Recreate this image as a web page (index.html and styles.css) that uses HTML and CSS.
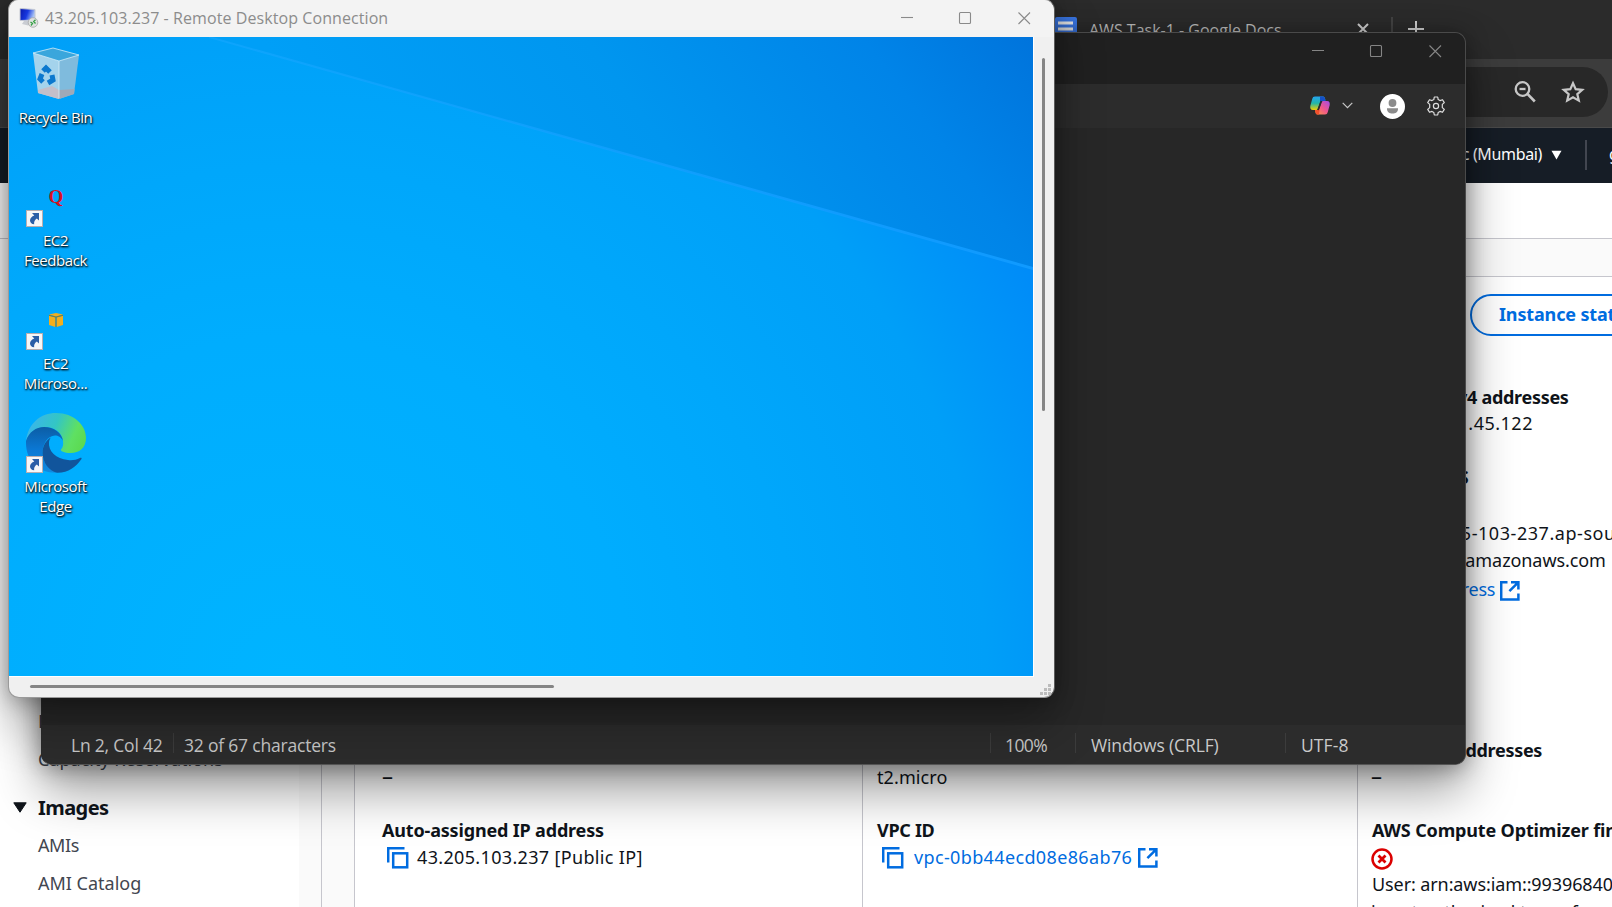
FILE: index.html
```html
<!DOCTYPE html>
<html lang="en">
<head>
<meta charset="utf-8">
<title>Desktop</title>
<link rel="stylesheet" href="styles.css">
</head>
<body>
<svg class="defs" width="0" height="0">
  <defs>
    <symbol id="copy" viewBox="0 0 22 22"><path d="M1.2 15.5V1.2H17.5" fill="none" stroke="#006ce0" stroke-width="2.5"/><rect x="6.2" y="6.3" width="14" height="14" fill="none" stroke="#006ce0" stroke-width="2.5"/></symbol>
    <symbol id="ext" viewBox="0 0 20 20"><path d="M7.5 1.2H1.2V18.4H18.4V12.5M11 1.2H18.4V8.5M18 1.6L9.4 10.2" fill="none" stroke="#006ce0" stroke-width="2.5"/></symbol>
    <symbol id="shortcut" viewBox="0 0 17 17"><rect x=".5" y=".5" width="16" height="16" fill="#f6f6f8" stroke="#b9aeb0"/><path d="M6 3H13V10.5L10.8 8.4C8.5 10 7.8 12 8.2 14.3C5.5 14.3 4 12.500 4 10.3C4.200 8 5.800 6.300 8.300 5.400Z" fill="#2b5ea7"/></symbol>
  </defs>
</svg>

<div class="browser">
  <div class="tabs">
    <svg class="docs" width="22" height="28" viewBox="0 0 22 28"><rect width="22" height="28" rx="2" fill="#3b78e7"/><path d="M3 6H18M3 12H18M3 18H13" stroke="#f1f1f1" stroke-width="3"/></svg>
    <span class="tabname">AWS Task-1 - Google Docs</span>
    <svg class="tabx" width="12" height="12" viewBox="0 0 12 12"><path d="M1 1L11 11M11 1L1 11" stroke="#d0d0d0" stroke-width="2"/></svg>
    <i class="tabsep"></i>
    <svg class="tabplus" width="16" height="16" viewBox="0 0 16 16"><path d="M8 0V16M0 8H16" stroke="#d0d0d0" stroke-width="2"/></svg>
  </div>
  <div class="toolbar">
    <div class="omnibox">
      <svg width="22" height="22" viewBox="0 0 22 22" fill="none" stroke="#c7c7c7" stroke-width="2.300"><circle cx="8.500" cy="8" r="6.800"/><path d="M5.500 8H11.500" /><path d="M13.200 12.700L20.800 20.500" stroke-width="2.600"/></svg>
      <svg width="24" height="24" viewBox="0 0 24 24" fill="none" stroke="#c7c7c7" stroke-width="2.200"><path d="M12 3.200L14.700 9.200L21.200 9.800L16.300 14.100L17.800 20.600L12 17.200L6.200 20.600L7.700 14.100L2.800 9.800L9.300 9.200Z"/></svg>
    </div>
  </div>
  <div class="awsnav">
    <span class="region">Asia Pacific (Mumbai)</span>
    <svg width="11" height="10" viewBox="0 0 11 10"><path d="M.5 .8H10.500L5.500 9.500Z" fill="#fff"/></svg>
    <i class="navsep"></i>
    <span class="user">g</span>
  </div>
  <div class="strip"></div>
  <div class="page">
    <aside class="side">
      <span class="item">Dedicated Hosts</span>
      <span class="item cap">Capacity Reservations</span>
      <div class="group"><svg width="14" height="11" viewBox="0 0 14 11"><path d="M.8 .8H13.200L7 10.200Z" fill="#0f141a" stroke="#0f141a" stroke-linejoin="round"/></svg><b>Images</b></div>
      <span class="item amis">AMIs</span>
      <span class="item catalog">AMI Catalog</span>
    </aside>
    <main class="main">
      <div class="crumbs"></div>
      <div class="panel">
        <div class="head"><span class="btn">Instance state</span></div>
        <div class="cols">
          <section class="col c1">
            <p class="dash"><span class="en">–</span></p>
            <h4 class="auto">Auto-assigned IP address</h4>
            <p class="val"><svg class="cp"><use href="#copy"/></svg><span class="ip">43.205.103.237 [Public IP]</span></p>
          </section>
          <section class="col c2">
            <p class="dash t2">t2.micro</p>
            <h4 class="vpc">VPC ID</h4>
            <p class="val"><svg class="cp"><use href="#copy"/></svg><a class="vpcid">vpc-0bb44ecd08e86ab76</a><svg class="ex"><use href="#ext"/></svg></p>
          </section>
          <section class="col c3">
            <h4 class="priv">Private IPv4 addresses</h4>
            <p class="privip">172.31.45.122</p>
            <h4 class="dnsh">Public DNS</h4>
            <p class="dns1">ec2-43-205-103-237.ap-south-</p>
            <p class="dns2">1.compute.amazonaws.com</p>
            <p class="open"><a>open address</a><svg class="ex"><use href="#ext"/></svg></p>
            <h4 class="elastic">Elastic IP addresses</h4>
            <p class="edash"><span class="en">–</span></p>
            <h4 class="opt">AWS Compute Optimizer finding</h4>
            <svg class="err" width="22" height="22" viewBox="0 0 22 22" fill="none" stroke="#db0000"><circle cx="11" cy="11" r="9.500" stroke-width="2.500"/><path d="M7.500 7.500L14.500 14.500M14.500 7.500L7.500 14.500" stroke-width="2.800"/></svg>
            <p class="arn">User: arn:aws:iam::993968409</p>
            <p class="arn2">is not authorized to perform:</p>
          </section>
        </div>
      </div>
    </main>
  </div>
</div>

<div class="notepad">
  <div class="ntitle">
    <svg width="131" height="14" viewBox="0 0 131 14" fill="none" stroke="#858585" stroke-width="1.100"><path d="M0 6.500H12"/><rect x="58.500" y="1.500" width="11" height="11" rx="1"/><path d="M117.500 1.500L129 13M129 1.500L117.500 13"/></svg>
  </div>
  <div class="ntools">
    <svg class="copilot" width="20" height="19" viewBox="0 0 20 19">
      <defs>
        <linearGradient id="ga" x1="0" y1="0" x2="0" y2="1"><stop offset="0" stop-color="#25a4f0"/><stop offset=".5" stop-color="#22b6a7"/><stop offset="1" stop-color="#f3d000"/></linearGradient>
        <linearGradient id="gb" x1="1" y1="0" x2="0" y2="1"><stop offset="0" stop-color="#a34be8"/><stop offset=".5" stop-color="#f0568c"/><stop offset="1" stop-color="#ff9c42"/></linearGradient>
      </defs>
      <path d="M5 .5H13C14.500 .5 15 2 15.500 4.500H12.500C10.500 4.500 10 6 9.500 8L8 12.500C7.500 13.500 7 14 5.500 14H3C.5 14 0 12 .3 10L2.200 3C2.700 1.300 3.500 .5 5 .5Z" fill="url(#ga)"/>
      <path d="M10 .5H13C14.500 .5 15 2 15.500 5H12.500C11 5 10.500 6 10 7Z" fill="#1450c8"/>
      <path d="M15 18.500H7.500C6 18.500 5.500 17 5 14H7.500C9 14 9.500 13 10 11L11.500 6.500C12 5.300 12.500 5 14 5H17C19.500 5 20 7 19.700 9L17.800 16C17.300 17.700 16.500 18.500 15 18.500Z" fill="url(#gb)"/>
      <path d="M5 14H8C9 14 9.400 13.200 9.800 12L9 18.500H7.500C6 18.500 5.400 17 5 14Z" fill="#f2502c"/>
      <path d="M11.300 5L8 14" stroke="#2c2c2c" stroke-width="1.600"/>
    </svg>
    <svg class="chev" width="11" height="7" viewBox="0 0 11 7"><path d="M.7 .9L5.500 5.700L10.300 .9" fill="none" stroke="#c8c8c8" stroke-width="1.200"/></svg>
    <svg class="acct" width="25" height="25" viewBox="0 0 25 25"><circle cx="12.500" cy="12.500" r="12.500" fill="#fff"/><circle cx="12.500" cy="9" r="3.900" fill="#8b8b8b"/><path d="M7 14.300H18V15C18 18 15.500 19.600 12.500 19.600S7 18 7 15Z" fill="#8b8b8b"/></svg>
    <svg class="gear" width="20" height="20" viewBox="0 0 20 20" fill="none" stroke="#dedede" stroke-width="1.200"><path d="M8.300 1H11.700L12.200 3.600L14 4.600L16.500 3.700L18.300 6.600L16.300 8.400V11.600L18.300 13.400L16.500 16.300L14 15.400L12.200 16.400L11.700 19H8.300L7.800 16.400L6 15.400L3.500 16.300L1.700 13.400L3.700 11.600V8.400L1.700 6.600L3.500 3.700L6 4.600L7.800 3.600Z" stroke-linejoin="round"/><circle cx="10" cy="10" r="2.600"/></svg>
  </div>
  <div class="nbody"></div>
  <div class="nstatus">
    <span class="s1"><b>Ln 2, Col 42</b></span>
    <span class="s2"><b>32 of 67 characters</b></span>
    <span class="s3"><b>100%</b></span>
    <span class="s4"><b>Windows (CRLF)</b></span>
    <span class="s5"><b>UTF-8</b></span>
  </div>
</div>

<div class="rdp">
  <div class="rtitle">
    <svg class="ricon" width="20" height="20" viewBox="0 0 20 20">
      <defs><linearGradient id="scr" x1="0" y1="0" x2="1" y2=".3"><stop offset="0" stop-color="#0a17a8"/><stop offset=".55" stop-color="#1738e0"/><stop offset="1" stop-color="#a9c4f5"/></linearGradient></defs>
      <path d="M1 .5L16 1.500V12L1 12.500Z" fill="url(#scr)" stroke="#c4c8d2"/>
      <path d="M5 13H12V15L9 17.500L3 16Z" fill="#c9ccd2"/>
      <circle cx="14" cy="14.500" r="4.800" fill="#dfe2e0" stroke="#a8a8a8" stroke-width=".8"/>
      <path d="M11.500 14L13.500 15.500L12 17.500M16.500 11.800L14.700 13.500L16.500 15.500" fill="none" stroke="#35a044" stroke-width="1.300"/>
    </svg>
    <span class="rname">43.205.103.237 - Remote Desktop Connection</span>
    <svg class="rctl" width="131" height="14" viewBox="0 0 131 14" fill="none" stroke="#8a8a8a" stroke-width="1.100"><path d="M0 6.500H12"/><rect x="58.500" y="1.500" width="11" height="11" rx="1"/><path d="M117.500 1.500L129 13M129 1.500L117.500 13"/></svg>
  </div>
  <div class="rview">
    <div class="desk">
      <svg class="wall" width="1024" height="639" viewBox="0 0 1024 639">
        <defs>
          <radialGradient id="w1" gradientUnits="userSpaceOnUse" cx="280" cy="640" r="850"><stop offset="0" stop-color="#00b4ff"/><stop offset=".4" stop-color="#00adfe"/><stop offset=".6" stop-color="#00a7fb"/><stop offset=".82" stop-color="#009ff8"/><stop offset="1" stop-color="#008bf8"/></radialGradient>
          <linearGradient id="w2" gradientUnits="userSpaceOnUse" x1="160" y1="-120" x2="655" y2="-491"><stop offset="0" stop-color="#009ff7"/><stop offset=".42" stop-color="#0096ef"/><stop offset=".78" stop-color="#0084e8"/><stop offset="1" stop-color="#0074dc"/></linearGradient>
          <linearGradient id="w4" x1="0" y1="0" x2="1" y2="0"><stop offset="0" stop-color="#16a7ff" stop-opacity=".6"/><stop offset="1" stop-color="#109aff"/></linearGradient>
        </defs>
        <rect width="1024" height="639" fill="url(#w1)"/>
        <path d="M200 0H1024V232Z" fill="url(#w2)"/>
        <path d="M200 -1L1024 230V233L200 1Z" fill="url(#w4)"/>
      </svg>
      <div class="icons">
        <div class="ico">
          <svg width="60" height="60" viewBox="0 0 60 60"><path d="M7 9L27 4L53 11L33 17Z" fill="#3aa6dc"/><path d="M7 9L33 17V55L12 49Z" fill="#a4d3ec"/><path d="M33 17L53 11L48 50L33 55Z" fill="#7fbbdd"/><path d="M12 46L26 42L33 46V55L12 49Z" fill="#c3bfca"/><path d="M33 46L48.500 45L48 50L33 55Z" fill="#9fa9b8"/><path d="M7 9L27 4L53 11L33 17ZM33 17V54" fill="none" stroke="#d4ecf8" stroke-width=".8"/><g fill="none" stroke="#0b78ce" stroke-width="5"><path d="M17 27L20 24L24 28"/><path d="M26 31L27 36L22 39"/><path d="M17 38L14 35L16 30"/></g></svg>
          <span class="lab l1">Recycle Bin</span>
        </div>
        <div class="ico">
          <svg width="60" height="60" viewBox="0 0 60 60"><text class="q" x="22.500" y="35.500">Q</text><use href="#shortcut" x="0" y="43" width="17" height="17"/></svg>
          <span class="lab l2">EC2<br>Feedback</span>
        </div>
        <div class="ico">
          <svg width="60" height="60" viewBox="0 0 60 60"><path d="M23 24.500L30 23L37 24.500L30 26.500Z" fill="#f4ae1c"/><path d="M23 25.700L29.300 27.500V37L23 35ZM37 25.700L30.700 27.500V37L37 35Z" fill="#f4ae1c"/><path d="M30 27V37M23 25.300L30 27L37 25.300" stroke="#8b7a2a" fill="none"/><use href="#shortcut" x="0" y="43" width="17" height="17"/></svg>
          <span class="lab l3">EC2<br>Microso...</span>
        </div>
        <div class="ico">
          <svg width="60" height="60" viewBox="0 0 60 60">
            <defs>
              <linearGradient id="e1" x1="0" y1=".3" x2="1" y2=".6"><stop offset="0" stop-color="#3bb4ee"/><stop offset=".45" stop-color="#33c6c4"/><stop offset=".8" stop-color="#5fe062"/><stop offset="1" stop-color="#5cda52"/></linearGradient>
              <linearGradient id="e2" x1=".3" y1="0" x2=".3" y2="1"><stop offset="0" stop-color="#0c5da5"/><stop offset=".5" stop-color="#0b78d4"/><stop offset="1" stop-color="#0f8ae0"/></linearGradient>
            </defs>
            <path d="M0 28C2 10 15 0 30 0C48 0 60 12 60 25C60 35 53 40 45 40C38 40 34 38 35 36.500C37 34 37.500 32 37 28C36 19 28 13.500 18 14C9 14.500 3 20 0 28Z" fill="url(#e1)"/>
            <path d="M0 28C3 19 10 14 18 14C28 14 36 20 37 28C35 24 32 22.500 29 22.500C22 23 17 30 16.500 39C16.500 48 22 56 31 59.700C13 60.500 0 48 0 30Z" fill="url(#e2)"/>
            <path d="M25 24.500C20 27 16.500 33 16.500 40C17 50 23 58 31 59.700C42 60 50 54 55.500 46C56 45 55 44.300 54 45C50 47 46 47.500 42 47C30 46 22 38 23 29C23.300 27 24 25.500 25 24.500Z" fill="#11559c"/>
            <use href="#shortcut" x="0" y="43" width="17" height="17"/>
          </svg>
          <span class="lab l4">Microsoft<br>Edge</span>
        </div>
      </div>
    </div>
    <div class="vbar"><i></i></div>
  </div>
  <div class="hbar"><i></i>
    <svg width="11" height="11" viewBox="0 0 11 11" fill="#bcbcbc"><path d="M8 0h3v3h-3zM4 4h3v3h-3zM8 4h3v3h-3zM0 8h3v3h-3zM4 8h3v3h-3zM8 8h3v3h-3z"/></svg>
  </div>
</div>
</body>
</html>
```
FILE: styles.css
```css
* { box-sizing: border-box; }
html, body { margin: 0; width: 1612px; height: 907px; overflow: hidden; background: #fff; }
body { position: relative; font-family: "Noto Sans", "Open Sans", sans-serif; color: #0f141a; }
.defs { position: absolute; }
svg { display: block; flex: none; }
p, h4 { margin: 0; white-space: nowrap; }
span, a { white-space: nowrap; }

/* browser */
.browser { width: 1612px; height: 907px; display: flex; flex-direction: column; overflow: hidden; }
.tabs { flex: none; height: 59px; background: #2b2b2b; padding: 17px 0 0 1055px; display: flex; align-items: flex-start; }
.tabname { margin: 1px 0 0 12px; width: 193px; font: 16px/24px "Open Sans", sans-serif; color: #bdbdbd; }
.tabx { margin: 6px 0 0 75px; }
.tabsep { width: 2px; height: 28px; background: #434343; margin-left: 22px; }
.tabplus { margin: 4px 0 0 15px; }
.toolbar { flex: none; height: 69px; background: #3c3c3c; border-bottom: 1px solid #4a4a4a; padding: 8px 4px 11px 0; }
.omnibox { height: 50px; margin-left: 60px; border-radius: 25px; background: #282828; display: flex; align-items: center; justify-content: flex-end; gap: 25px; padding-right: 23px; }
.awsnav { flex: none; height: 55px; background: #161d26; color: #fff; display: flex; align-items: center; justify-content: flex-end; font-size: 16px; padding-bottom: 1px; }
.region { margin-right: 9px; letter-spacing: -.35px; margin-top: -2px; }
.navsep { width: 2px; height: 30px; background: #424650; margin: 0 22px 0 23px; }
.user { width: 3px; overflow: hidden; margin-top: -2px; }
.strip { flex: none; height: 56px; border-bottom: 1px solid #c6c6cd; }
.page { flex: 1; display: flex; min-height: 0; }
.side { width: 322px; border-right: 1px solid #c6c6cd; background: linear-gradient(90deg, #fff 299px, #fafafa 299px); padding-top: 468px; display: flex; flex-direction: column; }
.item { margin-left: 38px; height: 38px; font-size: 18px; line-height: 28px; color: #424650; letter-spacing: 0; }
.group { height: 49px; display: flex; align-items: center; gap: 11px; padding-left: 13px; font-size: 20px; }
.group b { font-weight: 700; letter-spacing: -.55px; }
.amis { margin-top: -1px; letter-spacing: -.4px; }
.main { flex: 1; display: flex; flex-direction: column; min-width: 0; }
.crumbs { flex: none; height: 38px; background: #fafafa; border-bottom: 1px solid #c6c6cd; }
.panel { flex: 1; margin-left: 32px; border-left: 1px solid #c6c6cd; display: flex; flex-direction: column; min-height: 0; box-shadow: -32px 0 #fafafa; }
.head { flex: none; height: 105px; padding: 17px 0 0 1115px; }
.btn { display: block; width: 190px; height: 42px; border: 2px solid #006ce0; border-radius: 21px; color: #006ce0; font-weight: 700; font-size: 18px; line-height: 37px; padding-left: 27px; letter-spacing: -.15px; }
.cols { flex: 1; display: grid; grid-template-columns: 507px 495px 400px; min-height: 0; }
.col { font-size: 18px; line-height: 26px; min-height: 0; letter-spacing: -.3px; }
.col h4 { font-weight: 700; font-size: 18px; }
.c1 { padding: 382px 0 0 27px; }
.c2 { border-left: 1px solid #c6c6cd; padding: 382px 0 0 14px; }
.c3 { border-left: 1px solid #c6c6cd; padding: 2px 0 0 13px; margin-left: 0; }
.dash { height: 53px; }
.en { font-size: 22px; line-height: 20px; }
.t2 { letter-spacing: .1px; }
.auto { letter-spacing: -.17px; }
.val { display: flex; align-items: center; padding-left: 5px; height: 27px; }
.cp { width: 22px; height: 22px; margin-top: 3px; }
.ip { margin-left: 8px; letter-spacing: .34px; }
.vpcid { margin-left: 10px; margin-right: 6px; letter-spacing: .36px; }
a { color: #006ce0; }
.ex { width: 20px; height: 20px; margin-top: 3px; }
.priv { margin-left: 2px; }
.privip { margin-left: 38px; letter-spacing: .5px; }
.dnsh { margin-top: 28px; letter-spacing: 0; margin-left: 1px; }
.dns1 { margin-top: 30px; margin-left: 3px; letter-spacing: .55px; }
.dns2 { margin-top: 1px; letter-spacing: -.08px; }
.open { display: flex; align-items: center; gap: 5px; margin: 3px 0 0 13px; }
.elastic { margin-top: 135px; margin-left: 2px; }
.edash { margin-top: 1px; }
.opt { margin-top: 27px; }
.col .opt { letter-spacing: -.15px; margin-left: 1px; }
.err { margin-top: 5px; }
.arn { margin-top: 1px; margin-left: 1px; letter-spacing: -.1px; }
.arn2 { margin-top: 2px; letter-spacing: .1px; }

/* notepad */
.notepad { position: absolute; left: 41px; top: 32px; width: 1425px; height: 733px; border: 1px solid #4a4a4a; border-left-color: #2b2b2b; border-bottom-color: #555; border-radius: 11px; background: #272727; overflow: hidden; display: flex; flex-direction: column; box-shadow: 0 26px 50px rgba(0,0,0,.38), 0 2px 22px rgba(0,0,0,.36); }
.ntitle { height: 51px; background: #202020; padding: 11px 22px 0 0; display: flex; justify-content: flex-end; }
.ntools { height: 44px; background: #2c2c2c; display: flex; align-items: center; justify-content: flex-end; padding: 0 19px 1px 0; }
.chev { margin: 0 27px 0 12px; }
.gear { margin-left: 21px; }
.acct { margin-top: 1px; }
.nbody { flex: 1; }
.nstatus { height: 39px; background: #2c2c2c; display: grid; grid-template-columns: 131px 817px 85px 210px 180px; color: #c9c9c9; font: 17.5px/28px "Open Sans", sans-serif; letter-spacing: -.2px; padding-top: 4px; align-items: start; }
.nstatus span { padding-top: 2px; }
.nstatus b { font-weight: 400; display: block; }
.nstatus span + span { border-left: 1px solid #3c3c3c; height: 20px; margin-top: 4px; padding-top: 0; }
.nstatus span + span b { margin-top: -2px; }
.s1 { padding-left: 29px; }
.s2 { padding-left: 10px; }
.s3 { padding-left: 14px; letter-spacing: -.6px; }
.s4 { padding-left: 15px; letter-spacing: -.12px; }
.s5 { padding-left: 15px; letter-spacing: .1px; }

/* remote desktop */
.rdp { position: absolute; left: 8px; top: -1px; width: 1047px; height: 699px; border: 1px solid #9a9a9a; border-right-color: #5c5c5c; border-radius: 11px; background: #f0f0f0; overflow: hidden; display: flex; flex-direction: column; box-shadow: 0 26px 50px rgba(0,0,0,.3), 0 2px 22px rgba(0,0,0,.3); }
.rtitle { flex: none; height: 37px; background: #f3f3f3; display: flex; align-items: center; padding: 0 22px 1px 10px; }
.rname { margin-left: 6px; flex: 1; font: 16px/24px "Open Sans", sans-serif; letter-spacing: .08px; color: #8c8c8c; }
.rview { flex: none; height: 640px; display: flex; }
.desk { width: 1025px; height: 640px; border-right: 1px solid #fff; border-bottom: 1px solid #fff; position: relative; overflow: hidden; }
.icons { position: absolute; left: 0; top: 7px; width: 94px; }
.ico { height: 123px; display: flex; flex-direction: column; align-items: center; }
.q { font: bold 19px "Liberation Serif", serif; fill: #d6101f; }
.lab { margin: 3px 1px 0 0; text-align: center; font: 15px/20px "Open Sans", sans-serif; color: #fff; letter-spacing: -.43px; text-shadow: 1px 1px 2px #000, 0 1px 2px rgba(0,0,0,.8); }
.vbar { width: 20px; padding: 21px 0 0 8px; }
.vbar i { display: block; width: 3px; height: 353px; border-radius: 2px; background: #858585; }
.hbar { flex: 1; display: flex; justify-content: space-between; padding: 8px 3px 0 21px; }
.hbar i { width: 524px; height: 3px; border-radius: 2px; background: #858585; }
.hbar svg { margin-top: -1px; }
```
